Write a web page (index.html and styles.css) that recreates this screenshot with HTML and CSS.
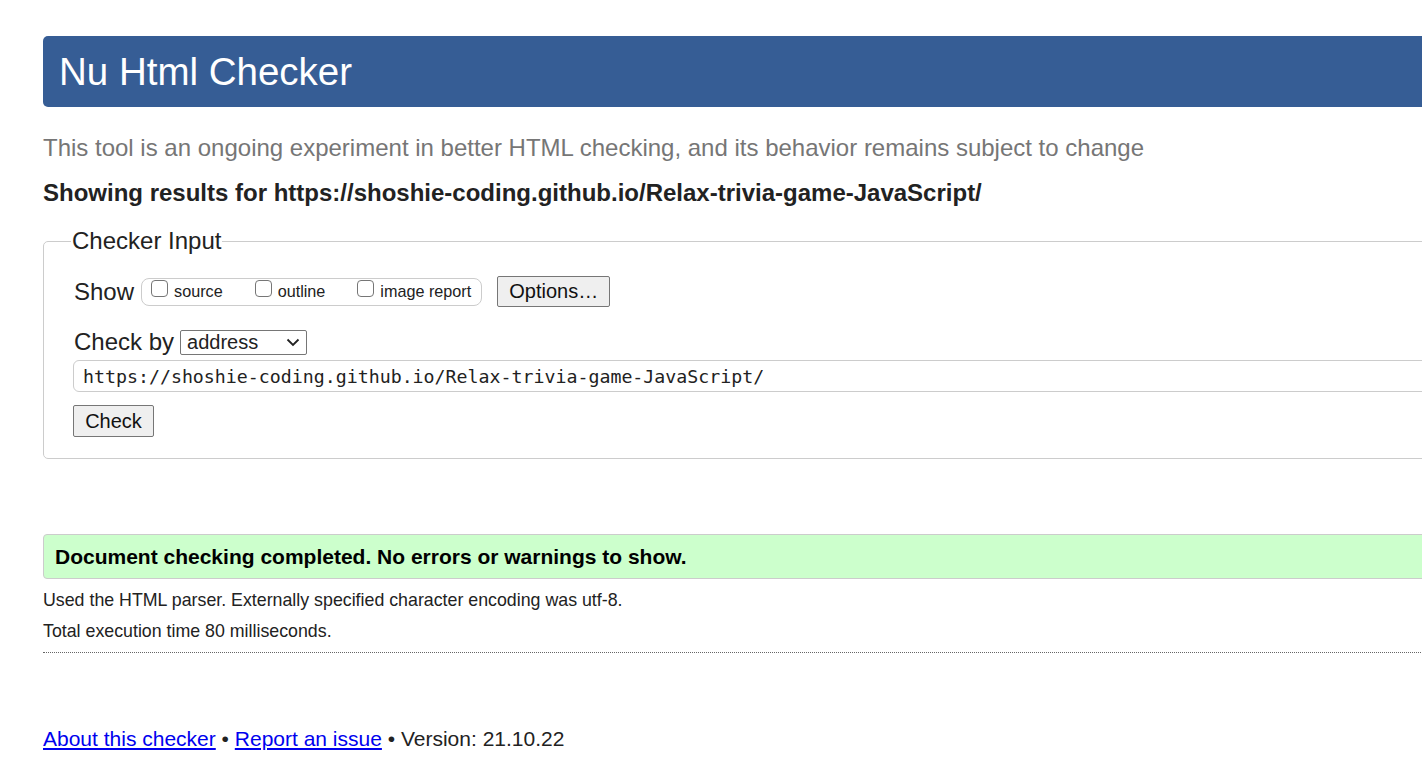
FILE: index.html
```html
<!DOCTYPE html>
<html lang="en">
<head>
<meta charset="utf-8">
<title>Nu Html Checker</title>
<link rel="stylesheet" href="styles.css">
</head>
<body>
<div class="page">
  <h1 class="banner">Nu Html Checker</h1>
  <p class="tagline">This tool is an ongoing experiment in better HTML checking, and its behavior remains subject to change</p>
  <p class="showing">Showing results for https://shoshie-coding.github.io/Relax-trivia-game-JavaScript/</p>
  <fieldset class="input-box">
    <legend>Checker Input</legend>
    <div class="row show-row">
      <span class="label">Show</span>
      <span class="opts">
        <label class="opt"><span class="cb"></span>source</label>
        <label class="opt"><span class="cb"></span>outline</label>
        <label class="opt"><span class="cb"></span>image report</label>
      </span>
      <button class="btn btn-options">Options…</button>
    </div>
    <div class="row by-row">
      <span class="label">Check by</span>
      <span class="select">address
        <svg class="chev" width="14" height="9" viewBox="0 0 14 9"><path d="M1.5 1.5 L7 7 L12.5 1.5" fill="none" stroke="#222" stroke-width="1.8"/></svg>
      </span>
    </div>
    <div class="url">https://shoshie-coding.github.io/Relax-trivia-game-JavaScript/</div>
    <div class="row"><button class="btn btn-check">Check</button></div>
  </fieldset>
  <div class="success">Document checking completed. No errors or warnings to show.</div>
  <p class="detail">Used the HTML parser. Externally specified character encoding was utf-8.</p>
  <p class="detail">Total execution time 80 milliseconds.</p>
  <hr class="dots">
  <p class="footer"><a href="#">About this checker</a> • <a href="#">Report an issue</a> • Version: 21.10.22</p>
</div>
</body>
</html>
```
FILE: styles.css
```css
html, body {
  margin: 0;
  padding: 0;
  overflow: hidden;
  background: #fff;
}
body {
  font-family: "Liberation Sans", Arial, sans-serif;
  color: #222;
}
.page {
  padding: 36px 0 0 43px;
  width: 1500px;
}
.banner {
  margin: 0;
  background: #365d95;
  color: #fff;
  font-weight: normal;
  font-size: 38.5px;
  height: 71px;
  line-height: 71px;
  padding-left: 16px;
  border-radius: 5px;
}
.tagline {
  margin: 26px 0 0;
  color: #767676;
  font-size: 24px;
  line-height: 30px;
}
.showing {
  margin: 15px 0 0;
  font-weight: bold;
  font-size: 24px;
  line-height: 30px;
}
.input-box {
  margin: 19px 0 0;
  border: 1px solid #ccc;
  border-radius: 5px;
  padding: 21px 0 21px 30px;
}
.input-box legend {
  font-size: 24px;
  padding: 0 1px;
  margin-left: -3px;
}
.row {
  display: flex;
  align-items: center;
}
.label {
  font-size: 24px;
}
.opts {
  display: flex;
  align-items: center;
  margin-left: 7px;
  border: 1px solid #ccc;
  border-radius: 8px;
  height: 28px;
  box-sizing: border-box;
  padding: 0 10px 0 9px;
  gap: 32px;
  font-size: 16.2px;
}
.opt {
  display: flex;
  align-items: center;
}
.cb {
  display: inline-block;
  width: 17px;
  height: 17px;
  border: 1px solid #767676;
  border-radius: 4px;
  margin-right: 6px;
  box-sizing: border-box;
  position: relative;
  top: -3px;
}
.btn {
  font-family: "Liberation Sans", Arial, sans-serif;
  background: #efefef;
  border: 1px solid #767676;
  border-radius: 2px;
  color: #111;
  padding: 0;
}
.btn-options {
  margin-left: 15px;
  width: 113px;
  height: 31px;
  font-size: 20px;
}
.by-row {
  margin-top: 21px;
}
.select {
  margin-left: 6px;
  display: inline-flex;
  align-items: center;
  justify-content: space-between;
  width: 127px;
  height: 25px;
  box-sizing: border-box;
  border: 1px solid #767676;
  border-radius: 2px;
  padding: 0 6px 0 6px;
  font-size: 20px;
}
.chev {
  margin-top: 1px;
}
.url {
  margin-top: 4px;
  margin-left: -1px;
  height: 32px;
  box-sizing: border-box;
  border: 1px solid #ccc;
  border-radius: 6px;
  font-family: "DejaVu Sans Mono", "Liberation Mono", monospace;
  font-size: 18.25px;
  line-height: 32px;
  padding-left: 9px;
}
.btn-check {
  margin-top: 13px;
  margin-left: -1px;
  width: 81px;
  height: 32px;
  font-size: 20px;
}
.success {
  margin-top: 75px;
  background: #ccffcc;
  border: 1px solid #ccc;
  border-radius: 4px;
  height: 45px;
  box-sizing: border-box;
  line-height: 43px;
  padding-left: 11px;
  font-weight: bold;
  font-size: 21px;
  color: #000;
}
.detail {
  margin: 0;
  font-size: 17.8px;
  line-height: 31px;
}
.success + .detail {
  margin-top: 6px;
}
.dots {
  margin: 5px 0 0;
  border: 0;
  border-top: 1px dotted #666;
  height: 0;
}
.footer {
  margin: 71px 0 0;
  font-size: 21px;
  line-height: 30px;
}
.footer a {
  color: #0000ee;
}
```
